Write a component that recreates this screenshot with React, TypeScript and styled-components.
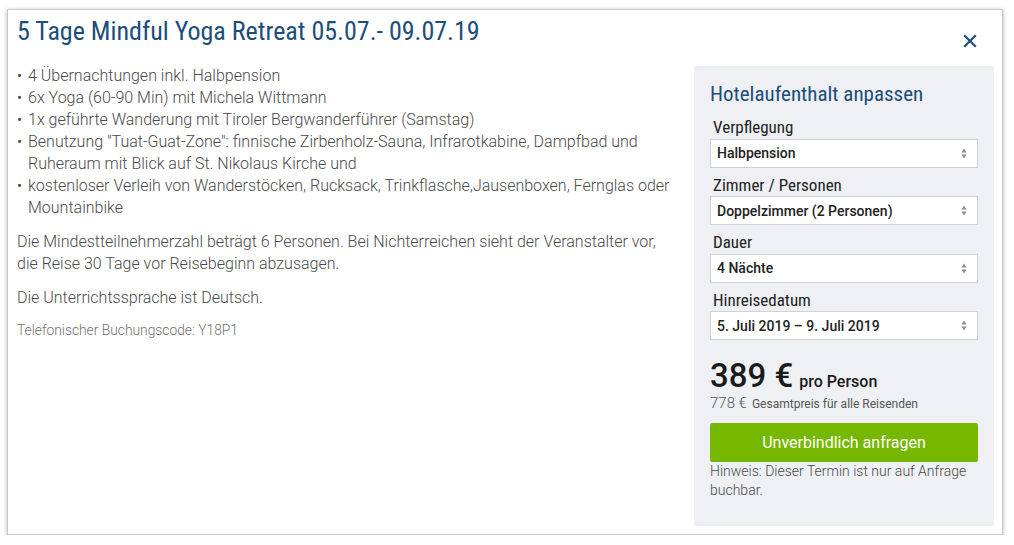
import React from "react";
import styled, { createGlobalStyle } from "styled-components";

const Global = createGlobalStyle`
  html, body { margin: 0; padding: 0; background: #fff; }
  body { font-family: Roboto, "Liberation Sans", sans-serif; }
  * { box-sizing: border-box; }
`;

const Frame = styled.div`
  margin: 9px 0 0 7px;
  width: 996px;
  height: 526px;
  border: 1px solid #c9c9c9;
  box-shadow: 0 1px 4px rgba(0, 0, 0, 0.3);
  background: #fff;
  display: flex;
  flex-direction: column;
  padding: 5px 8px 8px 9px;
`;

const Header = styled.div`
  display: flex;
  justify-content: space-between;
  align-items: flex-start;
  height: 50px;
`;

const Title = styled.h1`
  margin: 0;
  font-family: "Roboto Condensed", Roboto, sans-serif;
  font-stretch: condensed;
  font-weight: 400;
  font-size: 26px;
  line-height: 32px;
  color: #1d4d7a;
`;

const CloseButton = styled.button`
  border: 0;
  background: none;
  padding: 0;
  margin: 19px 17px 0 0;
  width: 14px;
  height: 14px;
  display: flex;
  color: #1d4d7a;
  cursor: pointer;
`;

const Body = styled.div`
  flex: 1;
  display: flex;
  align-items: stretch;
`;

const Content = styled.div`
  flex: 1;
  margin-right: 22px;
  color: #4a4a4a;
  font-weight: 300;
  font-size: 16px;
  line-height: 22px;
`;

const List = styled.ul`
  margin: 0;
  padding: 0;
  list-style: none;
`;

const Item = styled.li`
  display: flex;
  &::before {
    content: "•";
    flex: 0 0 11px;
    font-weight: 400;
    font-size: 15px;
  }
`;

const Para = styled.p`
  margin: 12px 0 0;
`;

const Code = styled.p`
  margin: 12px 0 0;
  font-size: 13.8px;
  line-height: 18px;
  color: #707070;
  font-weight: 300;
`;

const Panel = styled.aside`
  width: 300px;
  margin-top: 1px;
  background: #eef0f3;
  padding: 16px 16px 0;
  display: flex;
  flex-direction: column;
`;

const PanelTitle = styled.h2`
  margin: 0 0 10px;
  font-family: "Roboto Condensed", Roboto, sans-serif;
  font-stretch: condensed;
  font-weight: 400;
  font-size: 21px;
  line-height: 25px;
  color: #1d4d7a;
`;

const Field = styled.div`
  display: flex;
  flex-direction: column;
  margin-bottom: 7px;
`;

const Label = styled.label`
  font-family: "Roboto Condensed", Roboto, sans-serif;
  font-stretch: condensed;
  font-size: 17px;
  line-height: 20px;
  color: #222;
  padding-left: 3px;
  margin-bottom: 1.5px;
`;

const Select = styled.div`
  height: 29px;
  background: #fff;
  border: 1px solid #cfd2d6;
  display: flex;
  align-items: center;
  justify-content: space-between;
  padding: 0 10px 0 6px;
  font-size: 14px;
  font-weight: 500;
  color: #222;
`;

const Arrows = styled.svg`
  width: 6px;
  height: 11px;
  color: #8a8a8a;
`;

const PriceRow = styled.div`
  margin-top: 11px;
  display: flex;
  align-items: baseline;
  gap: 6px;
  color: #1a1a1a;
`;

const Price = styled.span`
  font-size: 33px;
  line-height: 36px;
  font-weight: 500;
`;

const PerPerson = styled.span`
  font-size: 16px;
  font-weight: 500;
`;

const Total = styled.div`
  display: flex;
  align-items: baseline;
  gap: 5px;
  color: #555;
  line-height: 18px;
`;

const TotalAmount = styled.span`
  font-size: 15px;
  font-weight: 300;
`;

const TotalLabel = styled.span`
  font-size: 12px;
  font-weight: 400;
`;

const Cta = styled.button`
  margin-top: 10px;
  height: 39px;
  border: 0;
  border-radius: 2px;
  background: #76b800;
  color: #fff;
  font-family: Roboto, sans-serif;
  font-size: 16px;
  font-weight: 400;
  cursor: pointer;
`;

const Note = styled.p`
  margin: 0;
  font-size: 14px;
  line-height: 19px;
  font-weight: 300;
  color: #4a4a4a;
`;

const fields = [
  ["Verpflegung", "Halbpension"],
  ["Zimmer / Personen", "Doppelzimmer (2 Personen)"],
  ["Dauer", "4 Nächte"],
  ["Hinreisedatum", "5. Juli 2019 – 9. Juli 2019"],
];

const items = [
  "4 Übernachtungen inkl. Halbpension",
  "6x Yoga (60-90 Min) mit Michela Wittmann",
  "1x geführte Wanderung mit Tiroler Bergwanderführer (Samstag)",
  'Benutzung "Tuat-Guat-Zone": finnische Zirbenholz-Sauna, Infrarotkabine, Dampfbad und Ruheraum mit Blick auf St. Nikolaus Kirche und',
  "kostenloser Verleih von Wanderstöcken, Rucksack, Trinkflasche,Jausenboxen, Fernglas oder Mountainbike",
];

export default function App() {
  return (
    <>
      <Global />
      <Frame>
        <Header>
          <Title>5 Tage Mindful Yoga Retreat 05.07.- 09.07.19</Title>
          <CloseButton aria-label="Schließen">
            <svg width="14" height="14" viewBox="0 0 14 14">
              <path d="M1.2 1.2L12.8 12.8M12.8 1.2L1.2 12.8" stroke="currentColor" strokeWidth="2.2" fill="none" />
            </svg>
          </CloseButton>
        </Header>
        <Body>
          <Content>
            <List>
              {items.map((t) => (
                <Item key={t}>
                  <span>{t}</span>
                </Item>
              ))}
            </List>
            <Para>
              Die Mindestteilnehmerzahl beträgt 6 Personen. Bei Nichterreichen sieht der Veranstalter vor, die Reise 30
              Tage vor Reisebeginn abzusagen.
            </Para>
            <Para>Die Unterrichtssprache ist Deutsch.</Para>
            <Code>Telefonischer Buchungscode: Y18P1</Code>
          </Content>
          <Panel>
            <PanelTitle>Hotelaufenthalt anpassen</PanelTitle>
            {fields.map(([l, v]) => (
              <Field key={l}>
                <Label>{l}</Label>
                <Select>
                  <span>{v}</span>
                  <Arrows viewBox="0 0 6 11">
                    <path d="M0.5 4.5L3 0.5L5.5 4.5Z M0.5 6.5L3 10.5L5.5 6.5Z" fill="currentColor" />
                  </Arrows>
                </Select>
              </Field>
            ))}
            <PriceRow>
              <Price>389 €</Price>
              <PerPerson>pro Person</PerPerson>
            </PriceRow>
            <Total>
              <TotalAmount>778 €</TotalAmount>
              <TotalLabel>Gesamtpreis für alle Reisenden</TotalLabel>
            </Total>
            <Cta>Unverbindlich anfragen</Cta>
            <Note>Hinweis: Dieser Termin ist nur auf Anfrage buchbar.</Note>
          </Panel>
        </Body>
      </Frame>
    </>
  );
}
